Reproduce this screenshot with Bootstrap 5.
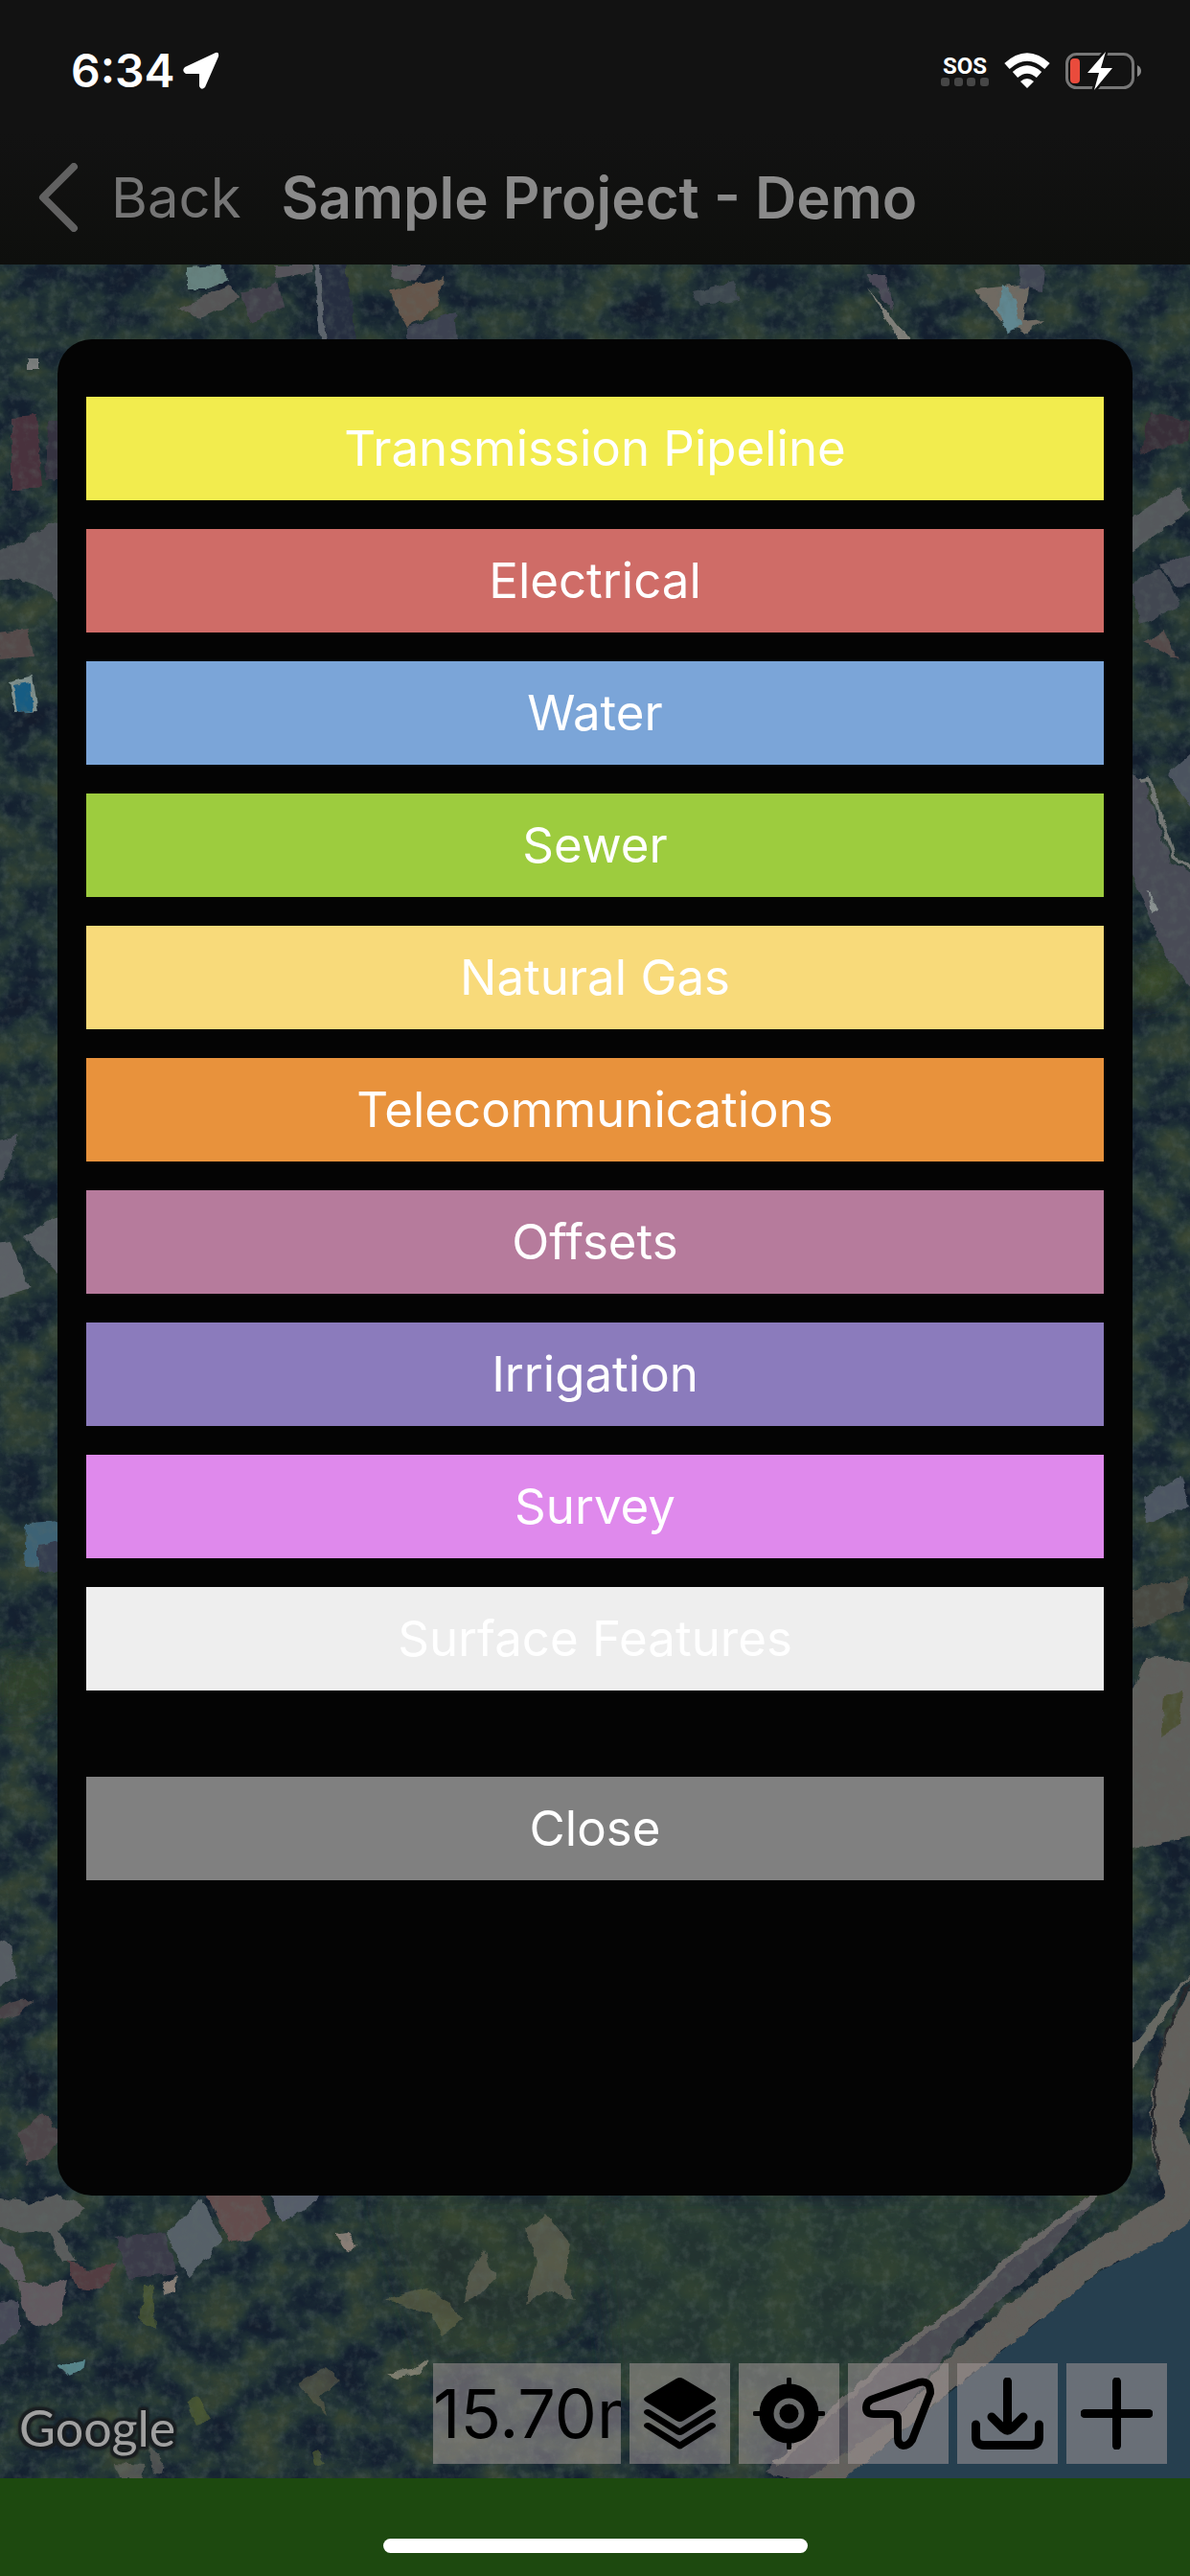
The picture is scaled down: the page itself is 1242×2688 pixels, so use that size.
<!DOCTYPE html>
<html lang="en">
<head>
<meta charset="utf-8">
<meta name="viewport" content="width=device-width, initial-scale=1">
<title>Sample Project - Demo</title>
<link href="https://cdn.jsdelivr.net/npm/bootstrap@5.3.0/dist/css/bootstrap.min.css" rel="stylesheet">
<style>
body { font-family: Inter, "Liberation Sans", sans-serif; background: #1d490f; }
svg { display: block; flex-shrink: 0; }
.app-header { background: linear-gradient(#121212 50%, #0e0f0d); }
.status-row { height: 98px; padding: 50px 50px 0 74px; }
.clock { font-size: 48px; line-height: 48px; font-weight: 600; }
.sos { font: 700 24px/24px Roboto, sans-serif; }
.title-row { height: 178px; padding: 58px 40px 20px; gap: 42px; }
.back-btn { color: #757575; font-size: 58px; line-height: 72px; gap: 34px; }
.page-title { color: #8a8a8a; font-size: 60px; line-height: 72px; font-weight: 600; }
.map-area { padding: 78px 60px 0; }
.layer-sheet { background: #040404; border-radius: 36px; padding: 60px 30px 30px; z-index: 1; }
.layer-list { gap: 30px; }
.layer-btn { height: 108px; border: 0; border-radius: 0; color: #fff; font-size: 51px; line-height: 64px; padding: 0; }
.close-btn { background: #808080; margin-top: 90px; }
.transmission { background: #f2ec4e; }
.electrical { background: #cf6c67; }
.water { background: #7ba5d8; }
.sewer { background: #9dcc3e; }
.gas { background: #f8da7a; }
.telecom { background: #e8923c; }
.offsets { background: #b67b9c; }
.irrigation { background: #8b7bbc; }
.survey { background: #df89ec; }
.surface { background: #eee; }
.map-tools { height: 295px; margin: 0 -36px 0 -40px; padding-bottom: 15px; gap: 9px; }
.map-credit { font: 400 52px/64px Lato, sans-serif; color: #a0a0a0; margin-bottom: 6px;
  text-shadow: 0 0 3px #1b1f22, 3px 0 2px #1b1f22, -3px 0 2px #1b1f22, 0 3px 2px #1b1f22, 0 -3px 2px #1b1f22, 3px 3px 2px #1b1f22, -3px -3px 2px #1b1f22, 3px -3px 2px #1b1f22, -3px 3px 2px #1b1f22; }
.tool-btn { width: 105px; height: 105px; padding: 15px; border: 0; background: rgba(172, 160, 160, .5); color: #000; }
.zoom-readout { width: 196px; padding: 0; font-size: 70px; line-height: 105px; text-align: left; white-space: nowrap; overflow: hidden; }
.home-bar { height: 102px; padding-bottom: 24px; background: #1d490f; }
.home-pill { width: 443px; height: 15px; border-radius: 8px; background: #fff; }
</style>
</head>
<body class="d-flex flex-column min-vh-100">
<header class="app-header">
  <div class="status-row d-flex align-items-center justify-content-between text-white">
    <div class="d-flex align-items-center">
      <span class="clock">6:34</span>
      <svg class="ms-2" width="38" height="40" viewBox="0 0 38 40" fill="#fff"><path d="M34 1 Q38 0 37 5 L23 37 Q19 41 17 36 L17 23 L3 23 Q-2 20 2 16Z"/></svg>
    </div>
    <div class="d-flex align-items-center gap-3">
      <div class="d-flex flex-column align-items-center">
        <span class="sos">SOS</span>
        <svg width="50" height="10" viewBox="0 0 50 10" fill="#464646"><rect width="9" height="9" rx="3"/><rect x="14" width="9" height="9" rx="3"/><rect x="27" width="9" height="9" rx="3"/><rect x="41" width="9" height="9" rx="3"/></svg>
      </div>
      <svg width="48" height="38" viewBox="0 0 48 38"><g fill="none" stroke="#fff" stroke-width="8"><path d="M3 14 Q24 -5 45 14"/><path d="M11.500 23 Q24 12 36.500 23"/></g><path d="M17 30 Q24 24 31 30 L24 37Z" fill="#fff"/></svg>
      <svg width="80" height="40" viewBox="0 0 80 40"><rect x="1.500" y="2.500" width="69" height="35" rx="10" fill="none" stroke="#777" stroke-width="3"/><path d="M75 14 Q79 16 79 20 T75 26Z" fill="#888"/><rect x="5" y="7" width="10" height="26" rx="4" fill="#ea4b3c"/><path d="M42 0 L23 22 H35 L30 40 L49 17 H37Z" fill="#fff" stroke="#111" stroke-width="5" paint-order="stroke"/></svg>
    </div>
  </div>
  <nav class="title-row d-flex align-items-center">
    <button type="button" class="back-btn btn border-0 p-0 d-flex align-items-center">
      <svg width="42" height="72" viewBox="0 0 42 72"><path d="M37 4 L5 36 L37 68" fill="none" stroke="#616161" stroke-width="8" stroke-linecap="round" stroke-linejoin="round"/></svg>
      Back
    </button>
    <h1 class="page-title mb-0">Sample Project - Demo</h1>
  </nav>
</header>
<main class="map-area flex-grow-1 d-flex flex-column position-relative">
  <svg class="position-absolute top-0 start-0 w-100 h-100" viewBox="0 276 1242 2310" preserveAspectRatio="xMidYMid slice" role="img" aria-label="Satellite map">
    <defs>
      <filter id="canopy" x="0" y="0" width="100%" height="100%" color-interpolation-filters="sRGB">
        <feTurbulence type="fractalNoise" baseFrequency=".02 .026" numOctaves="6" seed="8"/>
        <feColorMatrix values="1 0 0 0 0  1 0 0 0 0  1 0 0 0 0  0 0 0 0 1"/>
        <feComponentTransfer><feFuncR type="table" tableValues=".08 .08 .08 .08 .1 .13 .16 .19 .22 .25 .3"/><feFuncG type="table" tableValues=".11 .11 .12 .13 .16 .2 .23 .25 .27 .3 .34"/><feFuncB type="table" tableValues=".17 .17 .18 .19 .2 .21 .21 .2 .2 .22 .24"/></feComponentTransfer>
      </filter>
      <filter id="speckle" x="0" y="0" width="100%" height="100%" color-interpolation-filters="sRGB">
        <feTurbulence type="fractalNoise" baseFrequency=".1" numOctaves="4" seed="3"/>
        <feColorMatrix values="0 0 0 0 .36  0 0 0 0 .42  0 0 0 0 .4  1.600 0 0 0 -.72"/>
      </filter>
      <filter id="rough"><feTurbulence type="fractalNoise" baseFrequency=".07" numOctaves="3" result="n"/><feDisplacementMap in="SourceGraphic" in2="n" scale="8" xChannelSelector="R" yChannelSelector="G"/></filter>
      <filter id="soft" x="-30%" y="-30%" width="160%" height="160%"><feGaussianBlur stdDeviation="12"/></filter>
      <clipPath id="land"><path d="M0 276 H1242 V2310 L1148 2368 1037 2458 875 2586 H0Z"/></clipPath>
    </defs>
    <rect y="276" width="1242" height="2310" filter="url(#canopy)"/>
    <g filter="url(#soft)">
      <path d="M620 2291 H1160 L1010 2400 850 2530 640 2500Z" fill="#2f3f30" opacity=".6"/>
      <path d="M390 2291 H640 L600 2430 450 2480Z" fill="#31462f" opacity=".45"/>
      <path d="M0 1735 L60 1725 V1775 L0 1790Z" fill="#2f402c"/>
      <path d="M1182 1000 L1240 1010 1215 1040 1182 1050Z" fill="#3a4c27"/>
    </g>
    <g filter="url(#rough)" opacity=".55">
      <path d="M550 2325 L570 2310 595 2340 588 2375 600 2400 570 2392 548 2402 560 2360Z M490 2372 L505 2350 518 2375 500 2395 485 2402Z" fill="#77705f"/>
      <path d="M400 2400 L440 2388 468 2402 485 2420 462 2436 450 2415 420 2405Z" fill="#6d6c4c"/>
      <path d="M310 2488 L340 2470 355 2484 335 2500 340 2520 320 2500Z" fill="#68644d"/>
      <path d="M195 2508 L205 2500 220 2525 205 2530Z M325 2560 L332 2555 340 2570 328 2572Z M150 2385 L160 2385 162 2430 145 2420Z" fill="#606a32"/>
      <path d="M120 2570 L150 2572 148 2586 125 2586Z M155 2550 L170 2570 168 2582 160 2580Z" fill="#77706b"/>
    </g>
    <g filter="url(#rough)">
      <path d="M-10 580 L70 540 V640 Q40 595 -10 606Z" fill="#4b4f54"/>
      <path d="M12 436 L38 434 44 508 12 512Z" fill="#49333d"/><path d="M50 440 H64 V500 H48Z" fill="#35303f"/>
      <path d="M28 374 H40 V386 H28Z" fill="#7b7e7e"/>
      <path d="M-5 660 L30 656 35 685 0 688Z" fill="#54494a"/>
      <path d="M10 712 L34 706 40 742 16 744Z" fill="#81918e"/><path d="M14 715 L32 712 34 742 19 744Z" fill="#175c83"/>
      <path d="M-5 1190 L18 1184 10 1215 0 1235Z" fill="#4a5059"/>
      <path d="M-5 1296 L10 1294 32 1345 -5 1355Z" fill="#5c6166"/><path d="M24 1292 L66 1266 V1334Z" fill="#555a61"/>
      <path d="M28 1590 L64 1588 V1636 L26 1634Z" fill="#3e6275"/><path d="M40 1612 L64 1608 V1640 H40Z" fill="#353d50"/>
      <path d="M-5 2022 L10 2030 18 2065 -5 2075Z" fill="#575c64"/><path d="M-5 2095 L35 2085 20 2102 -5 2110Z" fill="#4a4247"/>
      <path d="M20 2225 L45 2205 64 2225 50 2250 28 2258Z" fill="#4e4448"/>
      <path d="M-10 2290 L30 2300 60 2290 90 2305 60 2328 80 2360 65 2360 50 2328 20 2330 -10 2320Z" fill="#5a5c5b"/>
      <path d="M-10 2335 L15 2345 28 2378 15 2378 -10 2350Z" fill="#5b5a60"/>
      <path d="M18 2378 L45 2385 70 2378 62 2420 45 2428 28 2420Z" fill="#625a60"/><path d="M-5 2402 L20 2400 20 2430 0 2450Z" fill="#474859"/>
      <path d="M70 2358 L90 2370 122 2362 105 2390 80 2388Z" fill="#533e42"/>
      <path d="M120 2335 L172 2330 185 2372 135 2378Z" fill="#3a3a49"/>
      <path d="M175 2332 L210 2293 232 2338 196 2378Z" fill="#566068"/>
      <path d="M215 2288 H270 L283 2318 260 2336 240 2340Z" fill="#644d4e"/>
      <path d="M280 2288 H336 L325 2300 296 2318Z" fill="#565d6b"/>
      <path d="M170 2382 L184 2374 182 2390 172 2396Z M350 2332 L362 2330 372 2344 360 2348Z" fill="#887d75"/>
      <path d="M60 2468 L88 2462 86 2474 72 2480Z" fill="#56858b"/>
      <path d="M405 2476 L430 2472 446 2460 440 2474 415 2482Z" fill="#7d7c6e"/>
      <path d="M195 278 L228 276 240 292 215 302 195 302Z" fill="#66827f"/>
      <path d="M185 322 L240 298 250 312 210 332Z" fill="#575457"/><path d="M250 305 L290 296 296 320 262 336Z" fill="#43414c"/>
      <path d="M405 304 L462 290 456 322 424 342Z" fill="#66574c"/><path d="M425 342 L475 325 478 356 425 356Z" fill="#3c4351"/>
      <path d="M285 276 H326 V284 L290 290Z M410 276 H445 L435 294 408 290Z" fill="#55525a"/>
      <path d="M328 274 H334 L341 356 H334Z" fill="#5c646c"/><path d="M334 274 H360 L372 356 H341Z" fill="#272e3f"/>
      <path d="M722 304 L766 294 772 314 730 318Z" fill="#3d4650"/>
      <path d="M898 286 L906 300 950 356 938 356Z" fill="#817f79"/><path d="M905 286 H925 L932 325Z" fill="#4a4756"/>
      <path d="M1016 302 L1075 296 1068 335 1090 333 1070 348 1040 330Z" fill="#6f6b62"/><path d="M1046 297 L1058 305 1066 340 1052 346 1042 325Z" fill="#618791"/>
      <path d="M1062 276 H1090 L1088 304 1066 300Z" fill="#434655"/>
      <path d="M1180 540 L1232 508 1242 532 1180 578Z" fill="#55595b"/><path d="M1180 610 L1212 592 1232 632 1190 652Z" fill="#424751"/><path d="M1212 588 L1250 575 V610 L1226 612Z" fill="#474b57"/>
      <path d="M1194 670 L1215 658 1230 688Z" fill="#54484a"/><path d="M1218 808 L1250 780 V850Z" fill="#4b535f"/><path d="M1200 430 L1242 440 1240 460 1190 474Z" fill="#392f38"/>
      <path d="M1178 808 L1194 814 1222 900 1250 914 V1040 L1215 995 1178 905Z" fill="#484b57"/>
      <path d="M1190 814 L1198 812 1226 896 1250 910" fill="none" stroke="#747875" stroke-width="4"/>
      <path d="M1197 928 L1210 948 1202 952Z" fill="#8b9291"/>
      <path d="M1195 1562 L1232 1540 1241 1572 1197 1590Z" fill="#4e5663"/>
      <path d="M1178 1660 L1240 1645 1236 1680 1182 1700Z" fill="#4a4843"/>
      <path d="M1178 1775 L1196 1730 1220 1728 1250 1740 V1915 L1178 1930Z" fill="#605e5b"/>
      <path d="M1215 1770 L1235 1765 1230 1800 1212 1812Z" fill="#4e5136"/>
    </g>
    <path d="M1250 2310 L1215 2336 1148 2370 1096 2412 1037 2460 977 2508 914 2560 870 2590 H1250Z" fill="#263f4f"/>
    <g filter="url(#rough)">
      <path d="M1146 2289 L1057 2353 1009 2401 930 2460 874 2511 800 2580 840 2590 938 2522 1000 2440 1096 2353Z" fill="#4c4b53"/>
      <path d="M1146 2289 L1057 2353 1009 2401 930 2460 874 2511 810 2572" fill="none" stroke="#696665" stroke-width="6"/>
      <path d="M1250 2050 L1207 2102 1178 2140 V2165 L1215 2105Z" fill="#676862"/>
      <path d="M1250 2060 L1215 2126 1201 2188 1203 2243 1217 2291 1175 2319 1112 2357 1049 2408 989 2460 938 2522 835 2592 H875 L914 2560 977 2508 1037 2460 1096 2412 1148 2370 1215 2336 1250 2312 V2256 L1231 2215 1250 2150Z" fill="#64605c"/>
      <path d="M1242 2070 Q1190 2155 1210 2265" fill="none" stroke="#25282b" stroke-width="3"/>
    </g>
    <g clip-path="url(#land)"><rect y="276" width="1242" height="2310" filter="url(#speckle)" opacity=".5"/></g>
  </svg>
  <section class="layer-sheet position-relative flex-grow-1" aria-label="Layers">
    <div class="layer-list d-grid">
      <button type="button" class="btn layer-btn transmission">Transmission Pipeline</button>
      <button type="button" class="btn layer-btn electrical">Electrical</button>
      <button type="button" class="btn layer-btn water">Water</button>
      <button type="button" class="btn layer-btn sewer">Sewer</button>
      <button type="button" class="btn layer-btn gas">Natural Gas</button>
      <button type="button" class="btn layer-btn telecom">Telecommunications</button>
      <button type="button" class="btn layer-btn offsets">Offsets</button>
      <button type="button" class="btn layer-btn irrigation">Irrigation</button>
      <button type="button" class="btn layer-btn survey">Survey</button>
      <button type="button" class="btn layer-btn surface">Surface Features</button>
    </div>
    <button type="button" class="btn layer-btn close-btn w-100">Close</button>
  </section>
  <div class="map-tools position-relative d-flex align-items-end">
    <span class="map-credit me-auto">Google</span>
    <button type="button" class="tool-btn zoom-readout">15.70m</button>
    <button type="button" class="tool-btn" aria-label="Layers"><svg width="75" height="75" viewBox="0 0 75 75"><path d="M34 1 Q37.500 -1 41 1 L73 20 Q77 22.500 73 25 L41 45 Q37.500 47 34 45 L2 25 Q-2 22.500 2 20Z"/><path d="M1 34 Q4 32 7 34 L37.500 53 68 34 Q71 32 74 34 Q76 36 74 38 L41 59 Q37.500 61 34 59 L1 38 Q-1 36 1 34Z M1 48 Q4 46 7 48 L37.500 67 68 48 Q71 46 74 48 Q76 50 74 52 L41 73 Q37.500 76 34 73 L1 52 Q-1 50 1 48Z"/></svg></button>
    <button type="button" class="tool-btn" aria-label="Locate"><svg width="75" height="75" viewBox="0 0 75 75"><g fill="none" stroke="#000"><circle cx="37.500" cy="37.500" r="23.500" stroke-width="15"/><path d="M37.500 2 V12 M37.500 63 V73 M2 37.500 H12 M63 37.500 H73" stroke-width="5" stroke-linecap="round"/></g><circle cx="37.500" cy="37.500" r="10"/></svg></button>
    <button type="button" class="tool-btn" aria-label="Navigate"><svg width="75" height="75" viewBox="0 0 75 75"><path d="M9 23 L59 5 Q71 2 71 16 L52 65 Q48 71 43 71 Q37 70 37 63 V44 Q37 38 31 38 H12 Q4 38 4 31 Q4 26 9 23Z" fill="none" stroke="#000" stroke-width="8" stroke-linejoin="round"/></svg></button>
    <button type="button" class="tool-btn" aria-label="Download"><svg width="75" height="75" viewBox="0 0 75 75"><path d="M37.500 4 V52 M21 41 L33 53 Q37.500 57 42 53 L54 41 M4.500 49 V62 Q4.500 70.500 13 70.500 H62 Q70.500 70.500 70.500 62 V49" fill="none" stroke="#000" stroke-width="9" stroke-linecap="round"/></svg></button>
    <button type="button" class="tool-btn" aria-label="Add"><svg width="75" height="75" viewBox="0 0 75 75"><path d="M37.500 4 V71 M4 37.500 H71" stroke="#000" stroke-width="9" stroke-linecap="round"/></svg></button>
  </div>
</main>
<footer class="home-bar d-flex align-items-end justify-content-center"><div class="home-pill"></div></footer>
<script src="https://cdn.jsdelivr.net/npm/bootstrap@5.3.0/dist/js/bootstrap.bundle.min.js"></script>
</body>
</html>
